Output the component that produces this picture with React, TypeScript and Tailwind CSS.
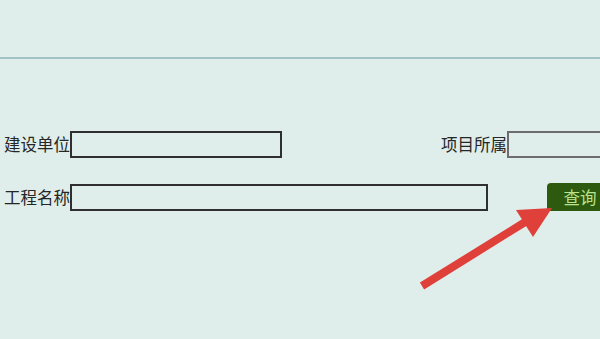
export default function App() {
  return (
    <div className="relative w-[600px] h-[339px] overflow-hidden bg-[#dfeeeb] font-['Noto_Sans_CJK_SC',sans-serif] text-[#262626]">
      {/* top band */}
      <div className="h-[59px] border-b-2 border-[#a3c3c6]" />

      {/* form */}
      <div className="flex flex-col gap-[25px] pt-[72px] pl-[4px]">
        <div className="flex items-center whitespace-nowrap">
          <span className="text-[16.5px] leading-none">建设单位</span>
          <div className="w-[212px] h-[27px] shrink-0 border-2 border-[#2f2f2f]" />
          <span className="ml-[159px] text-[16.5px] leading-none">项目所属</span>
          <div className="w-[100px] h-[27px] shrink-0 border-2 border-[#6d6d6d]" />
        </div>
        <div className="flex items-center whitespace-nowrap">
          <span className="text-[16.5px] leading-none">工程名称</span>
          <div className="w-[418px] h-[27px] shrink-0 border-2 border-[#2f2f2f]" />
          <button className="ml-[59px] w-[66px] h-[28px] shrink-0 rounded-tl-[4px] bg-[#2d5a0f] text-[16.5px] leading-none text-[#b9e38c]">
            查询
          </button>
        </div>
      </div>

      {/* annotation arrow */}
      <svg className="absolute left-0 top-0" width="600" height="339" viewBox="0 0 600 339">
        <line x1="422" y1="286" x2="530" y2="219" stroke="#e0403a" strokeWidth="8" />
        <polygon points="552,208 516,210 533,237" fill="#e0403a" />
      </svg>
    </div>
  );
}
